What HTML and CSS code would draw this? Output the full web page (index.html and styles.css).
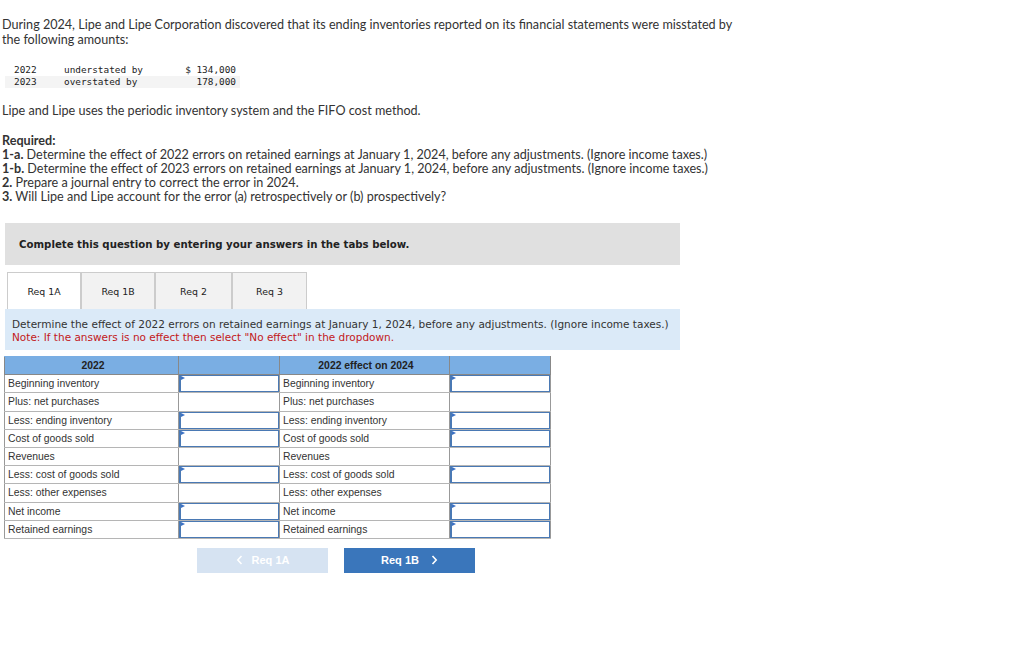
FILE: index.html
```html
<!DOCTYPE html>
<html>
<head>
<meta charset="utf-8">
<link rel="stylesheet" href="styles.css">
</head>
<body>
<div class="page">
  <p class="intro">During 2024, Lipe and Lipe Corporation discovered that its ending inventories reported on its financial statements were misstated by the following amounts:</p>
  <table class="mono">
    <tr><td class="yr">2022</td><td class="desc">understated by</td><td class="amt">$ 134,000</td></tr>
    <tr class="alt"><td class="yr">2023</td><td class="desc">overstated by</td><td class="amt">178,000</td></tr>
  </table>
  <p class="method">Lipe and Lipe uses the periodic inventory system and the FIFO cost method.</p>
  <div class="required">
    <div class="req-title">Required:</div>
    <div><b>1-a.</b> Determine the effect of 2022 errors on retained earnings at January 1, 2024, before any adjustments. (Ignore income taxes.)</div>
    <div><b>1-b.</b> Determine the effect of 2023 errors on retained earnings at January 1, 2024, before any adjustments. (Ignore income taxes.)</div>
    <div><b>2.</b> Prepare a journal entry to correct the error in 2024.</div>
    <div><b>3.</b> Will Lipe and Lipe account for the error (a) retrospectively or (b) prospectively?</div>
  </div>
  <div class="complete">Complete this question by entering your answers in the tabs below.</div>
  <div class="tabs">
    <div class="tab active">Req 1A</div>
    <div class="tab">Req 1B</div>
    <div class="tab">Req 2</div>
    <div class="tab">Req 3</div>
  </div>
  <div class="instr">
    <div>Determine the effect of 2022 errors on retained earnings at January 1, 2024, before any adjustments. (Ignore income taxes.)</div>
    <div class="note">Note: If the answers is no effect then select "No effect" in the dropdown.</div>
  </div>
  <table class="grid">
    <colgroup><col class="c1"><col class="c2"><col class="c3"><col class="c4"></colgroup>
    <tr class="head"><th>2022</th><th></th><th>2022 effect on 2024</th><th></th></tr>
    <tr><td>Beginning inventory</td><td class="in"><div class="box"></div></td><td>Beginning inventory</td><td class="in"><div class="box"></div></td></tr>
    <tr><td>Plus: net purchases</td><td></td><td>Plus: net purchases</td><td></td></tr>
    <tr><td>Less: ending inventory</td><td class="in"><div class="box"></div></td><td>Less: ending inventory</td><td class="in"><div class="box"></div></td></tr>
    <tr><td>Cost of goods sold</td><td class="in"><div class="box"></div></td><td>Cost of goods sold</td><td class="in"><div class="box"></div></td></tr>
    <tr><td>Revenues</td><td></td><td>Revenues</td><td></td></tr>
    <tr><td>Less: cost of goods sold</td><td class="in"><div class="box"></div></td><td>Less: cost of goods sold</td><td class="in"><div class="box"></div></td></tr>
    <tr><td>Less: other expenses</td><td></td><td>Less: other expenses</td><td></td></tr>
    <tr><td>Net income</td><td class="in"><div class="box"></div></td><td>Net income</td><td class="in"><div class="box"></div></td></tr>
    <tr><td>Retained earnings</td><td class="in"><div class="box"></div></td><td>Retained earnings</td><td class="in"><div class="box"></div></td></tr>
  </table>
  <div class="nav">
    <div class="btn prev"><svg class="chev left" width="7" height="10" viewBox="0 0 7 10"><path d="M5.5 1 L1.8 5 L5.5 9" fill="none" stroke="#fff" stroke-width="1.6"/></svg>Req 1A</div>
    <div class="btn next">Req 1B<svg class="chev right" width="7" height="10" viewBox="0 0 7 10"><path d="M1.5 1 L5.2 5 L1.5 9" fill="none" stroke="#fff" stroke-width="1.6"/></svg></div>
  </div>
</div>
</body>
</html>
```

FILE: styles.css
```css
html, body { margin: 0; padding: 0; background: #fff; }
.page {
  padding: 17px 0 0 2px;
  font-family: "Lato", "Liberation Sans", sans-serif;
  font-size: 12.6px;
  color: #333;
}
.intro { margin: 0; line-height: 15px; width: 740px; }
.mono {
  border-collapse: collapse;
  margin: 17px 0 0 3px;
  font-family: "DejaVu Sans Mono", monospace;
  font-size: 9.4px;
  color: #222;
}
.mono td { height: 12px; padding: 0; line-height: 12px; }
.mono .alt { background: #f4f4f4; }
.mono .yr { padding-left: 9px; width: 50px; }
.mono .desc { width: 107px; }
.mono .amt { text-align: right; width: 65px; padding-right: 4px; }
.method { margin: 15px 0 0; line-height: 15px; }
.required { margin-top: 16px; line-height: 14px; }
.req-title { font-weight: bold; }
.required b { font-weight: bold; }
.complete {
  margin: 19px 0 0 3px;
  width: 661px;
  height: 42px;
  padding-left: 14px;
  background: #e0e0e0;
  font-family: "DejaVu Sans", Verdana, sans-serif;
  font-weight: bold;
  font-size: 10.2px;
  color: #222;
  display: flex;
  align-items: center;
}
.tabs { display: flex; margin: 7px 0 0 5px; }
.tab {
  width: 72px;
  height: 36px;
  border: 1px solid #ccc;
  border-bottom: none;
  background: #f2f2f2;
  font-family: "DejaVu Sans", Verdana, sans-serif;
  font-size: 9.4px;
  color: #222;
  display: flex;
  align-items: center;
  justify-content: center;
}
.tab.active { background: #fff; }
.tabs .tab:nth-child(3) { width: 75px; }
.tabs .tab:nth-child(4) { width: 73px; }
.instr {
  margin-left: 3px;
  width: 675px;
  height: 41px;
  padding: 9px 0 0 7px;
  box-sizing: border-box;
  background: #dbeaf8;
  font-family: "DejaVu Sans", Verdana, sans-serif;
  font-size: 10.5px;
  line-height: 13px;
  color: #333;
}
.note { color: #c3191b; }
.grid {
  margin: 6px 0 0 2px;
  border-collapse: collapse;
  table-layout: fixed;
  width: 547px;
  font-family: "Liberation Sans", Arial, sans-serif;
  font-size: 10.4px;
  color: #333;
}
.grid .c1 { width: 174px; }
.grid .c2 { width: 101px; }
.grid .c3 { width: 170px; }
.grid .c4 { width: 101px; }
.grid th, .grid td {
  border: 1px solid #999;
  height: 17px;
  padding: 0 0 0 3px;
  box-sizing: border-box;
  text-align: left;
}
.grid tr { height: 18.2px; }
.grid th {
  background: #7aaee3;
  text-align: center;
  font-weight: bold;
  color: #222;
  border-color: #888;
  border-top: 1px solid #7aaee3;
}
.grid td { border-color: #b5b5b5 #999; }
.grid td.in { padding: 0; position: relative; }
.box {
  position: absolute;
  left: 0; top: 0; right: 0; bottom: 0;
  border: 1px solid #4a79b4;
  border-left-width: 2px;
  background: #fff;
}
.box::before {
  content: "";
  position: absolute;
  left: 0; top: 0;
  border-left: 4px solid #3d72c4;
  border-top: 2.5px solid transparent;
  border-bottom: 2.5px solid transparent;
}
.nav { display: flex; gap: 16px; margin: 9px 0 0 195px; }
.btn {
  width: 131px;
  height: 25px;
  display: flex;
  align-items: center;
  justify-content: center;
  font-family: "Liberation Sans", Arial, sans-serif;
  font-weight: bold;
  font-size: 11px;
  color: #fff;
}
.prev { background: #d6e3f2; }
.next { background: #3a76bb; }
.chev.left { margin-right: 9px; }
.chev.right { margin-left: 12px; }
```
